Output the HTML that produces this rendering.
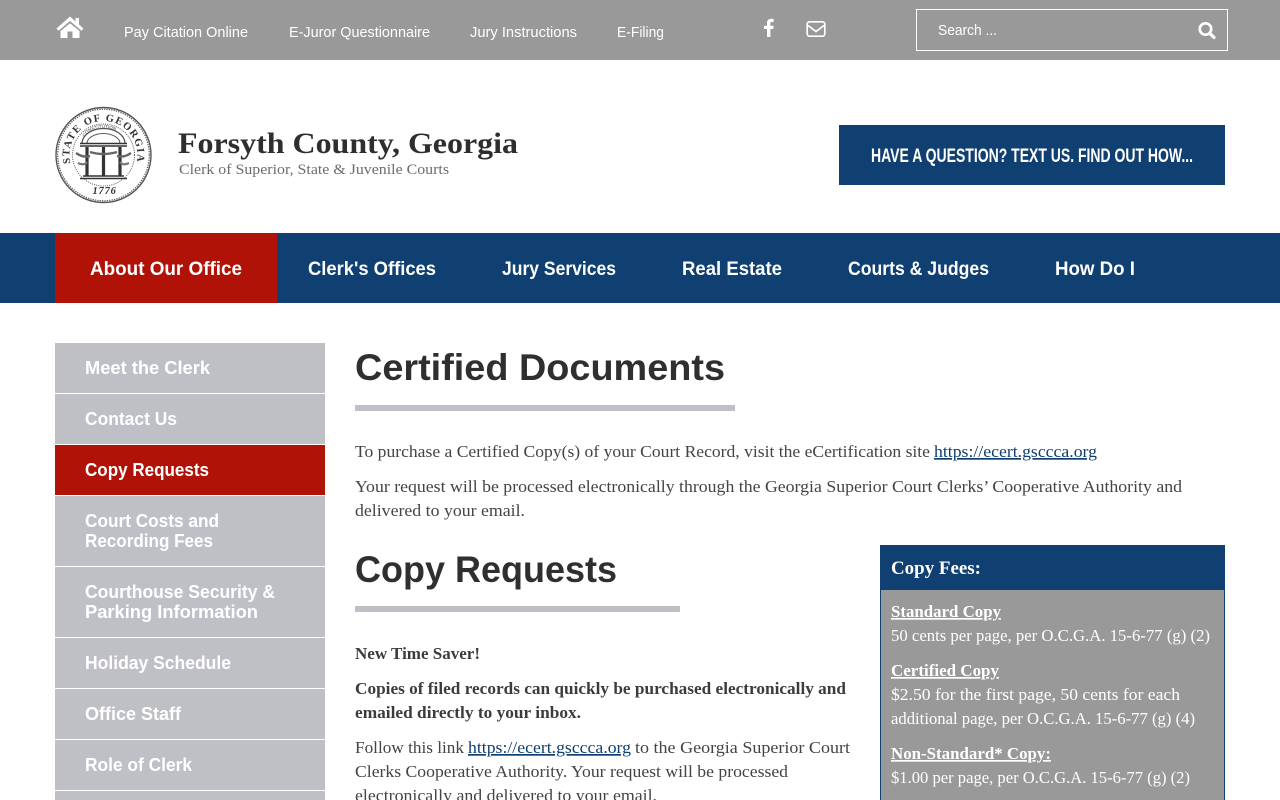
<!DOCTYPE html>
<html lang="en"><head><meta charset="utf-8"><title>Certified Documents - Forsyth County, Georgia</title>
<style>
html,body{margin:0;padding:0;width:1280px;height:800px;overflow:hidden;background:#fff}
svg{display:block}
text{white-space:pre}
.s{font-family:"Liberation Sans",Arial,sans-serif}
.f{font-family:"Liberation Serif","Times New Roman",serif}
.t{font-size:14.5px;fill:#fff}
.n{font-size:19px;font-weight:700;fill:#fff}
.m{font-size:18px;font-weight:700;fill:#fff}
.h{font-size:37px;font-weight:700;fill:#2f2f2f}
.p{font-size:17px;fill:#444}
.b{font-size:17px;fill:#3c3c3c;font-weight:700}
.l{font-size:17px;fill:#103f71;text-decoration:underline}
.w{font-size:17px;fill:#fff}
.u{font-size:17px;fill:#fff;font-weight:700;text-decoration:underline}
</style></head><body>
<svg xmlns="http://www.w3.org/2000/svg" width="1280" height="800" viewBox="0 0 1280 800">
<rect width="1280" height="60" fill="#999"/>
<path d="M70 16.500 56.500 28.500l2 2.300L70 21l11.500 9.800 2-2.300-4.500-4V18h-3.500v3.500z" fill="#fff"/>
<path d="M60.500 31 70 23.300 79.500 31v7h-7v-6.500h-5V38h-7z" fill="#fff"/>
<g class="s t">
<text x="124" y="37" textLength="124" lengthAdjust="spacingAndGlyphs">Pay Citation Online</text>
<text x="289" y="37" textLength="141" lengthAdjust="spacingAndGlyphs">E-Juror Questionnaire</text>
<text x="470" y="37" textLength="107" lengthAdjust="spacingAndGlyphs">Jury Instructions</text>
<text x="617" y="37" textLength="47" lengthAdjust="spacingAndGlyphs">E-Filing</text>
<text x="938" y="35" textLength="59" lengthAdjust="spacingAndGlyphs">Search ...</text>
</g>
<path d="M767 37V29h-3v-3.300h3v-2.500c0-2.900 1.700-4.400 4.200-4.400 1.200 0 2.200.1 2.500.1v3h-1.700c-1.400 0-1.600.6-1.600 1.600v2.200h3.300l-.4 3.300h-2.900v8z" fill="#fff"/>
<rect x="807.200" y="21.800" width="17.600" height="14.400" rx="2.200" fill="none" stroke="#fff" stroke-width="1.700"/>
<path d="M808 25.500l8 6 8-6" fill="none" stroke="#fff" stroke-width="1.700"/>
<rect x="916.500" y="9.500" width="311" height="41" fill="none" stroke="#fff" stroke-width="1"/>
<circle cx="1205.500" cy="29" r="5.700" fill="none" stroke="#fff" stroke-width="2.700"/>
<path d="M1209.700 33.200l4.300 4.300" stroke="#fff" stroke-width="3.200" stroke-linecap="round"/>

<!-- seal -->
<g fill="none" stroke="#555">
<circle cx="103.500" cy="155" r="47.500" stroke-width="1.400"/>
<circle cx="103.500" cy="155" r="45.800" stroke-width="1.200" stroke-dasharray="1.300 1.100"/>
<circle cx="103.500" cy="155" r="31" stroke-width="1" stroke-dasharray="1 1.200"/>
<path d="M82 143.500a21.500 15 0 0 1 43 0" stroke-width="1.300"/>
<path d="M87 143.500a16.500 10 0 0 1 33 0" stroke-width="1"/>
<path d="M80 143.500h47M80 146h47" stroke-width="1.600" stroke="#333"/>
<path d="M83 176h41M80 178.500h47" stroke-width="1.500" stroke="#333"/>
<path d="M103.500 147v29M87 147v29M120 147v29" stroke="#333" stroke-width="3.200"/>
<path d="M76 153q7 5 14 3M131 153q-7 5-14 3M90 152q13 4 27 0" stroke-width="2.400" stroke="#666"/>
<path d="M78 163q6 3 9-1M129 163q-6 3-9-1" stroke-width="2.200" stroke="#777"/>
</g>
<defs>
<path id="arc" d="M70.500 163.200a34 34 0 1 1 66 0"/>
<path id="arc2" d="M84 141a19.500 13 0 0 1 39 0"/>
</defs>
<text font-size="10.500" font-weight="700" class="f" fill="#333" letter-spacing="1.200"><textPath href="#arc" startOffset="0">STATE OF GEORGIA</textPath></text>
<text font-size="4.500" class="s" fill="#444"><textPath href="#arc2" startOffset="4">CONSTITUTION</textPath></text>
<text x="92.500" y="194" font-size="10.500" font-style="italic" font-weight="700" class="f" fill="#333" letter-spacing=".8">1776</text>

<text class="f" x="178" y="153" font-size="30" font-weight="700" fill="#2e2e2e" textLength="340" lengthAdjust="spacingAndGlyphs">Forsyth County, Georgia</text>
<text class="f" x="179" y="174" font-size="15" fill="#6c6c6c" textLength="270" lengthAdjust="spacingAndGlyphs">Clerk of Superior, State &amp; Juvenile Courts</text>
<rect x="839" y="125" width="386" height="60" fill="#103f71"/>
<text class="s" x="871" y="162" font-size="19" font-weight="700" fill="#fff" textLength="322" lengthAdjust="spacingAndGlyphs">HAVE A QUESTION? TEXT US. FIND OUT HOW...</text>

<rect y="233" width="1280" height="70" fill="#103f71"/>
<rect x="55" y="233" width="222" height="70" fill="#b01208"/>
<g class="s n">
<text x="90" y="275" textLength="152" lengthAdjust="spacingAndGlyphs">About Our Office</text>
<text x="308" y="275" textLength="128" lengthAdjust="spacingAndGlyphs">Clerk's Offices</text>
<text x="502" y="275" textLength="114" lengthAdjust="spacingAndGlyphs">Jury Services</text>
<text x="682" y="275" textLength="100" lengthAdjust="spacingAndGlyphs">Real Estate</text>
<text x="848" y="275" textLength="141" lengthAdjust="spacingAndGlyphs">Courts &amp; Judges</text>
<text x="1055" y="275" textLength="80" lengthAdjust="spacingAndGlyphs">How Do I</text>
</g>

<g fill="#bfc0c6">
<rect x="55" y="343" width="270" height="50"/>
<rect x="55" y="394" width="270" height="50"/>
<rect x="55" y="445" width="270" height="50" fill="#b01208"/>
<rect x="55" y="496" width="270" height="70"/>
<rect x="55" y="567" width="270" height="70"/>
<rect x="55" y="638" width="270" height="50"/>
<rect x="55" y="689" width="270" height="50"/>
<rect x="55" y="740" width="270" height="50"/>
<rect x="55" y="791" width="270" height="9"/>
</g>
<g class="s m">
<text x="85" y="374" textLength="125" lengthAdjust="spacingAndGlyphs">Meet the Clerk</text>
<text x="85" y="425" textLength="92" lengthAdjust="spacingAndGlyphs">Contact Us</text>
<text x="85" y="476" textLength="124" lengthAdjust="spacingAndGlyphs">Copy Requests</text>
<text x="85" y="527" textLength="134" lengthAdjust="spacingAndGlyphs">Court Costs and</text>
<text x="85" y="547" textLength="128" lengthAdjust="spacingAndGlyphs">Recording Fees</text>
<text x="85" y="598" textLength="190" lengthAdjust="spacingAndGlyphs">Courthouse Security &amp;</text>
<text x="85" y="618" textLength="173" lengthAdjust="spacingAndGlyphs">Parking Information</text>
<text x="85" y="669" textLength="146" lengthAdjust="spacingAndGlyphs">Holiday Schedule</text>
<text x="85" y="720" textLength="96" lengthAdjust="spacingAndGlyphs">Office Staff</text>
<text x="85" y="771" textLength="107" lengthAdjust="spacingAndGlyphs">Role of Clerk</text>
</g>

<text class="s h" x="355" y="380" textLength="370" lengthAdjust="spacingAndGlyphs">Certified Documents</text>
<rect x="355" y="405" width="380" height="6" fill="#bfc0c6"/>
<g class="f">
<text class="p" x="355" y="457" textLength="575" lengthAdjust="spacingAndGlyphs">To purchase a Certified Copy(s) of your Court Record, visit the eCertification site</text>
<text class="l" x="934" y="457" textLength="163" lengthAdjust="spacingAndGlyphs">https://ecert.gsccca.org</text>
<text class="p" x="355" y="492" textLength="827" lengthAdjust="spacingAndGlyphs">Your request will be processed electronically through the Georgia Superior Court Clerks’ Cooperative Authority and</text>
<text class="p" x="355" y="516" textLength="170" lengthAdjust="spacingAndGlyphs">delivered to your email.</text>
</g>
<text class="s h" x="355" y="582" textLength="262" lengthAdjust="spacingAndGlyphs">Copy Requests</text>
<rect x="355" y="606" width="325" height="6" fill="#bfc0c6"/>
<g class="f">
<text class="b" x="355" y="659" textLength="125" lengthAdjust="spacingAndGlyphs">New Time Saver!</text>
<text class="b" x="355" y="694" textLength="491" lengthAdjust="spacingAndGlyphs">Copies of filed records can quickly be purchased electronically and</text>
<text class="b" x="355" y="718" textLength="226" lengthAdjust="spacingAndGlyphs">emailed directly to your inbox.</text>
<text class="p" x="355" y="753" textLength="109" lengthAdjust="spacingAndGlyphs">Follow this link</text>
<text class="l" x="468" y="753" textLength="163" lengthAdjust="spacingAndGlyphs">https://ecert.gsccca.org</text>
<text class="p" x="635" y="753" textLength="215" lengthAdjust="spacingAndGlyphs">to the Georgia Superior Court</text>
<text class="p" x="355" y="777" textLength="433" lengthAdjust="spacingAndGlyphs">Clerks Cooperative Authority. Your request will be processed</text>
<text class="p" x="355" y="801" textLength="302" lengthAdjust="spacingAndGlyphs">electronically and delivered to your email.</text>
</g>

<rect x="880" y="545" width="345" height="255" fill="#103f71"/>
<rect x="881" y="590" width="343" height="210" fill="#999"/>
<g class="f">
<text x="891" y="574" font-size="18.500" font-weight="700" fill="#fff" textLength="90" lengthAdjust="spacingAndGlyphs">Copy Fees:</text>
<text class="u" x="891" y="617" textLength="110" lengthAdjust="spacingAndGlyphs">Standard Copy</text>
<text class="w" x="891" y="641" textLength="319" lengthAdjust="spacingAndGlyphs">50 cents per page, per O.C.G.A. 15-6-77 (g) (2)</text>
<text class="u" x="891" y="676" textLength="108" lengthAdjust="spacingAndGlyphs">Certified Copy</text>
<text class="w" x="891" y="700" textLength="289" lengthAdjust="spacingAndGlyphs">$2.50 for the first page, 50 cents for each</text>
<text class="w" x="891" y="724" textLength="304" lengthAdjust="spacingAndGlyphs">additional page, per O.C.G.A. 15-6-77 (g) (4)</text>
<text class="u" x="891" y="759" textLength="160" lengthAdjust="spacingAndGlyphs">Non-Standard* Copy:</text>
<text class="w" x="891" y="783" textLength="299" lengthAdjust="spacingAndGlyphs">$1.00 per page, per O.C.G.A. 15-6-77 (g) (2)</text>
</g>
</svg>
</body></html>
